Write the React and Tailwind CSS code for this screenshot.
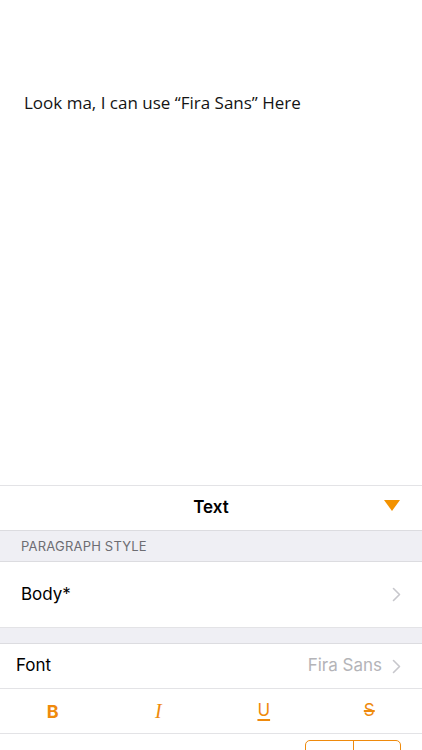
import React from 'react'

const ORANGE = 'text-[#ef8a0c]'

const Chevron = () => (
  <svg width="9" height="15" viewBox="0 0 9 15" className="shrink-0">
    <polyline points="1.5,1.5 7.5,7.5 1.5,13.5" fill="none" stroke="#c7c7cc" strokeWidth="1.6" strokeLinecap="round" strokeLinejoin="round" />
  </svg>
)

const App = () => {
  const sf = { fontFamily: 'Inter, "Liberation Sans", sans-serif' }

  return (
    <div className="w-[422px] h-[750px] overflow-hidden bg-white flex flex-col" style={sf}>
      {/* document area */}
      <div className="h-[486px] shrink-0 pt-[91px] pl-6 border-b border-[#e3e3e6]">
        <p className="text-[17px] leading-6 text-[#141414]" style={{ fontFamily: '"Open Sans", "Noto Sans", sans-serif' }}>
          Look ma, I can use “Fira Sans” Here
        </p>
      </div>

      {/* panel header */}
      <div className="h-[44px] shrink-0 relative flex items-center justify-center">
        <span className="text-[17px] font-semibold text-black">Text</span>
        <svg width="16" height="12" viewBox="0 0 16 12" className="absolute right-[22px] top-[14px]">
          <polygon points="0,0 16,0 8,11" fill="#f39200" />
        </svg>
      </div>

      {/* section header */}
      <div className="h-[32px] shrink-0 bg-[#efeff4] border-y border-[#dcdce0] flex items-center pl-[21px] pt-[1px]">
        <span className="text-[13px] tracking-[0.2px] text-[#6d6d72]">PARAGRAPH STYLE</span>
      </div>

      <div className="h-[66px] shrink-0 flex items-center justify-between pl-[21px] pr-[21px] border-b border-[#e3e3e6]">
        <span className="text-[17px] text-black">Body*</span>
        <Chevron />
      </div>

      <div className="h-[16px] shrink-0 bg-[#efeff4] border-b border-[#dcdce0]" />

      <div className="h-[45px] shrink-0 flex items-center justify-between pl-4 pr-[21px] border-b border-[#e3e3e6]">
        <span className="text-[17px] text-black">Font</span>
        <div className="flex items-center gap-[10px]">
          <span className="text-[17px] text-[#b4b4b8]">Fira Sans</span>
          <Chevron />
        </div>
      </div>

      <div className="h-[45px] shrink-0 grid grid-cols-4 items-center border-b border-[#e3e3e6]">
        <span className={`text-center text-[18px] font-bold ${ORANGE}`}>B</span>
        <span className={`text-center text-[20px] italic ${ORANGE}`} style={{ fontFamily: '"Liberation Serif", serif' }}>I</span>
        <span className={`text-center text-[17px] underline underline-offset-[3px] decoration-[1.5px] ${ORANGE}`}>U</span>
        <span className={`text-center text-[17px] line-through decoration-2 ${ORANGE}`}>S</span>
      </div>

      <div className="h-[45px] shrink-0 flex items-start justify-between pl-4 pr-[21px] pt-[6px]">
        <span className="text-[17px] leading-6 text-black mt-[8px]">Size</span>
        <div className="w-[96px] h-[29px] flex border border-[#ef8a0c] rounded-[5px]">
          <div className={`flex-1 flex items-center justify-center text-[20px] ${ORANGE}`}>−</div>
          <div className="w-px bg-[#ef8a0c]" />
          <div className={`flex-1 flex items-center justify-center text-[20px] ${ORANGE}`}>+</div>
        </div>
      </div>
    </div>
  )
}

export default App
